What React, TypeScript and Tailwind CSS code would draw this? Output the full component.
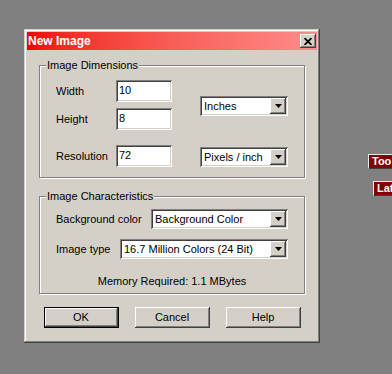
import React from "react";

const sunken =
  "bg-white shadow-[inset_1px_1px_0_#808080,inset_-1px_-1px_0_#ffffff,inset_2px_2px_0_#404040,inset_-2px_-2px_0_#d4d0c8]";
const raised =
  "bg-[#d4d0c8] shadow-[inset_-1px_-1px_0_#404040,inset_1px_1px_0_#ffffff,inset_-2px_-2px_0_#808080,inset_2px_2px_0_#d4d0c8]";

function TextBox({ value }: { value: string }) {
  return (
    <div className={`${sunken} w-[56px] h-[22px] pl-[3px] pt-[4px] leading-[13px]`}>{value}</div>
  );
}

function Select({ value, width }: { value: string; width: string }) {
  return (
    <div className={`${sunken} ${width} h-[20px] p-[2px] flex`}>
      <div className="flex-1 pl-[2px] leading-[16px] whitespace-nowrap overflow-hidden">{value}</div>
      <div className={`${raised} w-[16px] h-[16px] flex items-center justify-center`}>
        <svg width="7" height="4" viewBox="0 0 7 4">
          <path d="M0 0 H7 L3.5 4 Z" fill="#000" />
        </svg>
      </div>
    </div>
  );
}

function GroupBox({ title, children, className = "" }: { title: string; children: React.ReactNode; className?: string }) {
  return (
    <div className={`border border-[#808080] shadow-[inset_1px_1px_0_#ffffff,1px_1px_0_#ffffff] ${className}`}>
      <span className="block w-fit ml-[6px] px-[1px] -mt-[7px] leading-[13px] bg-[#d4d0c8]">{title}</span>
      {children}
    </div>
  );
}

function Button({ label, isDefault = false }: { label: string; isDefault?: boolean }) {
  if (isDefault) {
    return (
      <div className="w-[75px] h-[21px] border border-black">
        <div className={`${raised} w-full h-full flex items-center justify-center`}>{label}</div>
      </div>
    );
  }
  return <div className={`${raised} w-[75px] h-[21px] flex items-center justify-center`}>{label}</div>;
}

export default function App() {
  return (
    <div className="relative w-[392px] h-[374px] overflow-hidden bg-[#808080] pl-[24px] pt-[29px] font-['Liberation_Sans',Arial,sans-serif] text-[11px] text-black">
      {/* Dialog window */}
      <div className="w-[296px] h-[314px] p-[3px] bg-[#d4d0c8] shadow-[inset_-1px_-1px_0_#404040,inset_1px_1px_0_#d4d0c8,inset_-2px_-2px_0_#808080,inset_2px_2px_0_#ffffff]">
        <div className="h-[18px] flex items-center justify-between bg-linear-to-r from-[#ee0000] to-[#ff8c8c] pl-[1px] pr-[1px]">
          <span className="text-white font-bold text-[12px] leading-[14px]">New Image</span>
          <div className={`${raised} w-[16px] h-[14px] flex items-center justify-center`}>
            <svg width="8" height="7" viewBox="0 0 8 7">
              <path d="M0.5 0 L7.5 7 M7.5 0 L0.5 7" stroke="#000" strokeWidth="1.7" />
            </svg>
          </div>
        </div>

        <div className="px-[12px]">
          <GroupBox title="Image Dimensions" className="mt-[15px]">
            <div className="flex pl-[16px] pt-[8px] pb-[10px]">
              <div className="flex flex-col">
                <div className="flex items-center">
                  <span className="w-[60px]">Width</span>
                  <TextBox value="10" />
                </div>
                <div className="flex items-center mt-[6px]">
                  <span className="w-[60px]">Height</span>
                  <TextBox value="8" />
                </div>
                <div className="flex items-center mt-[15px]">
                  <span className="w-[60px]">Resolution</span>
                  <TextBox value="72" />
                </div>
              </div>
              <div className="flex flex-col ml-[28px]">
                <div className="mt-[16px]">
                  <Select value="Inches" width="w-[88px]" />
                </div>
                <div className="mt-[31px]">
                  <Select value="Pixels / inch" width="w-[88px]" />
                </div>
              </div>
            </div>
          </GroupBox>

          <GroupBox title="Image Characteristics" className="mt-[18px]">
            <div className="pl-[16px] pt-[6px] pb-[5px]">
              <div className="flex items-center">
                <span className="w-[95px]">Background color</span>
                <Select value="Background Color" width="w-[137px]" />
              </div>
              <div className="flex items-center mt-[10px]">
                <span className="w-[64px]">Image type</span>
                <Select value="16.7 Million Colors (24 Bit)" width="w-[168px]" />
              </div>
            </div>
            <div className="text-center leading-[13px] mt-[11px] pb-[5px]">Memory Required: 1.1 MBytes</div>
          </GroupBox>

          <div className="flex justify-center gap-[16px] mt-[13px]">
            <Button label="OK" isDefault />
            <Button label="Cancel" />
            <Button label="Help" />
          </div>
        </div>
      </div>

      {/* Partially visible desktop palettes */}
      <div className="absolute left-[368px] top-[154px] h-[15px] pl-[3px] pr-[12px] bg-[#800000] text-white font-bold leading-[13px] whitespace-nowrap border border-t-[#e8e8e8] border-l-[#e8e8e8] border-r-[#404040] border-b-[#404040]">
        Too
      </div>
      <div className="absolute left-[373px] top-[181px] h-[15px] pl-[3px] pr-[12px] bg-[#800000] text-white font-bold leading-[13px] whitespace-nowrap border border-t-[#e8e8e8] border-l-[#e8e8e8] border-r-[#404040] border-b-[#404040]">
        Lat
      </div>
    </div>
  );
}
